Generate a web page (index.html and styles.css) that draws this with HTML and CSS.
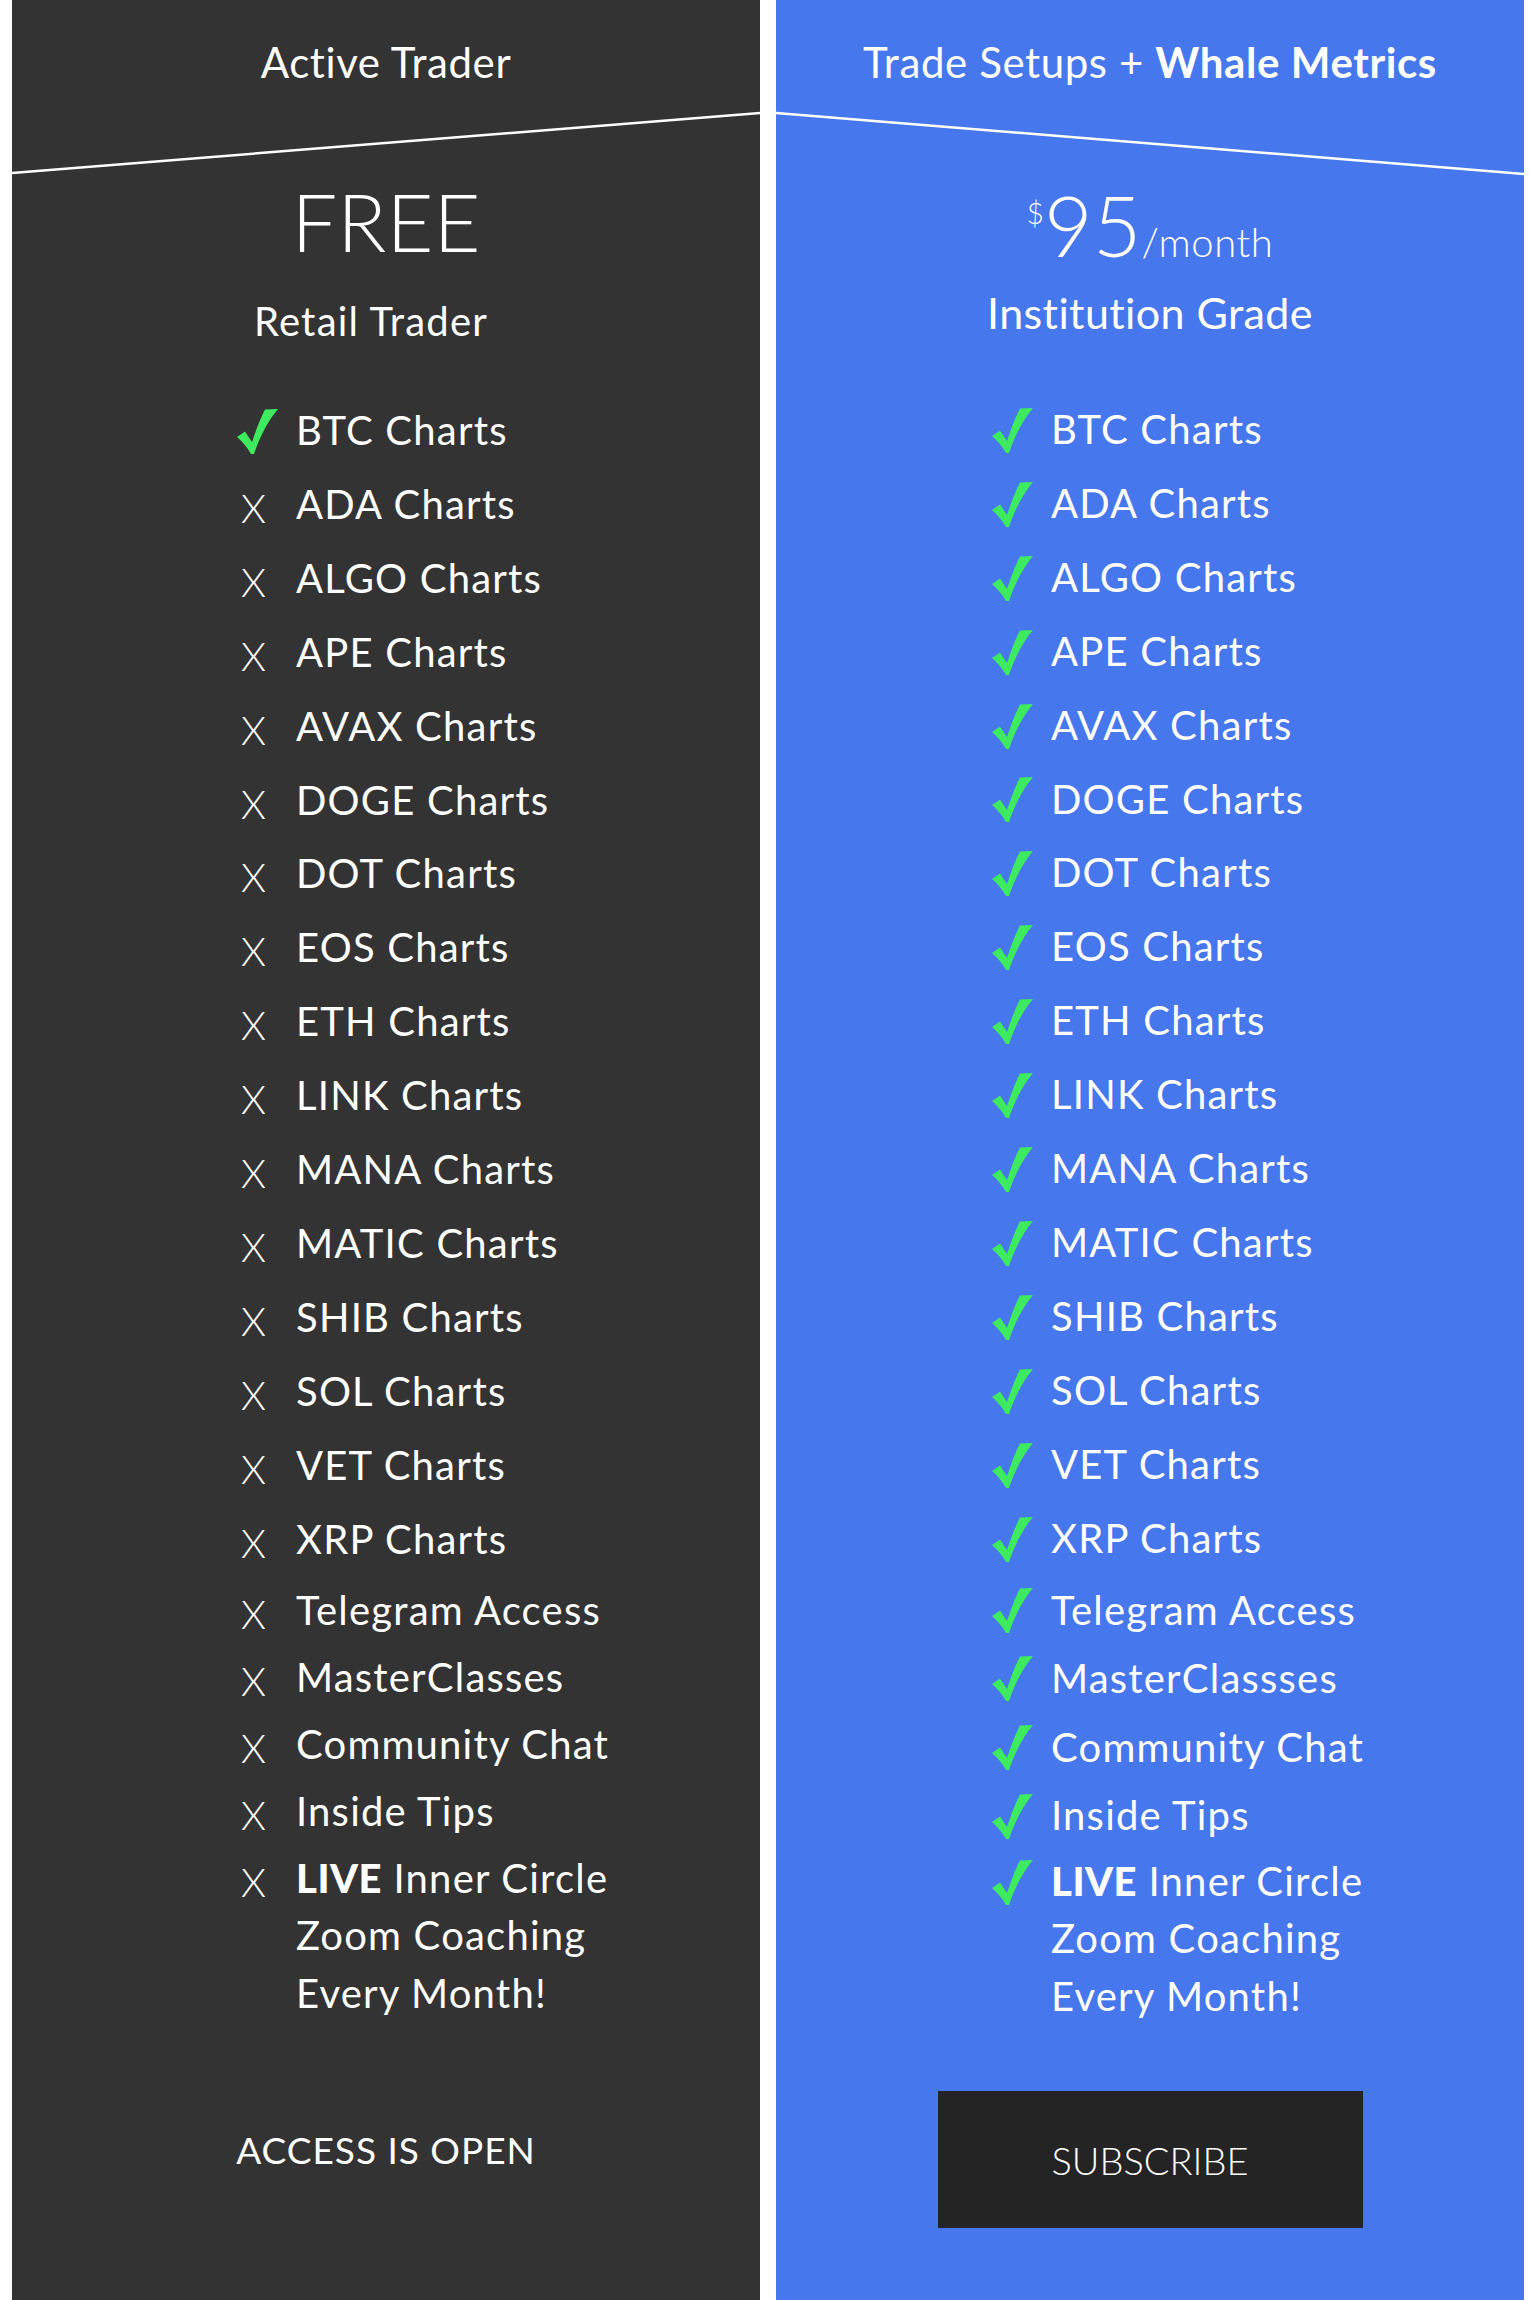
FILE: index.html
```html
<!DOCTYPE html>
<html lang="en">
<head>
    <meta charset="UTF-8">
    <meta name="viewport" content="width=device-width, initial-scale=1.0">
    <title>Plans - Active Trader vs Whale Metrics</title>
    <link rel="stylesheet" href="styles.css">
</head>
<body>
    <svg class="sprites" xmlns="http://www.w3.org/2000/svg">
        <symbol id="check" viewBox="0 0 41 46">
            <path d="M0 29 L8 23.5 L15 34 C19 22 23 11 28 1.5 L41 1 C31 13 23 28 17 46 L14 46 C10 39 5 33.5 0 29 Z"/>
        </symbol>
    </svg>

    <div class="plans">
        <!-- free plan -->
        <section class="plan plan-free">
            <header class="plan-head">Active Trader</header>
            <svg class="divider" viewBox="0 0 748 66" preserveAspectRatio="none">
                <line x1="0" y1="63" x2="748" y2="3" />
            </svg>
            <div class="price">FREE</div>
            <div class="tier">Retail Trader</div>

            <ul class="features">
                <li class="feature"><span class="mark"><svg><use href="#check"/></svg></span><span class="label">BTC Charts</span></li>
                <li class="feature"><span class="mark mark-x">X</span><span class="label">ADA Charts</span></li>
                <li class="feature"><span class="mark mark-x">X</span><span class="label">ALGO Charts</span></li>
                <li class="feature"><span class="mark mark-x">X</span><span class="label">APE Charts</span></li>
                <li class="feature"><span class="mark mark-x">X</span><span class="label">AVAX Charts</span></li>
                <li class="feature"><span class="mark mark-x">X</span><span class="label">DOGE Charts</span></li>
                <li class="feature"><span class="mark mark-x">X</span><span class="label">DOT Charts</span></li>
                <li class="feature"><span class="mark mark-x">X</span><span class="label">EOS Charts</span></li>
                <li class="feature"><span class="mark mark-x">X</span><span class="label">ETH Charts</span></li>
                <li class="feature"><span class="mark mark-x">X</span><span class="label">LINK Charts</span></li>
                <li class="feature"><span class="mark mark-x">X</span><span class="label">MANA Charts</span></li>
                <li class="feature"><span class="mark mark-x">X</span><span class="label">MATIC Charts</span></li>
                <li class="feature"><span class="mark mark-x">X</span><span class="label">SHIB Charts</span></li>
                <li class="feature"><span class="mark mark-x">X</span><span class="label">SOL Charts</span></li>
                <li class="feature"><span class="mark mark-x">X</span><span class="label">VET Charts</span></li>
                <li class="feature"><span class="mark mark-x">X</span><span class="label">XRP Charts</span></li>
                <li class="feature extra"><span class="mark mark-x">X</span><span class="label">Telegram Access</span></li>
                <li class="feature extra"><span class="mark mark-x">X</span><span class="label">MasterClasses</span></li>
                <li class="feature extra"><span class="mark mark-x">X</span><span class="label">Community Chat</span></li>
                <li class="feature extra"><span class="mark mark-x">X</span><span class="label">Inside Tips</span></li>
                <li class="feature live"><span class="mark mark-x">X</span><span class="label"><b>LIVE</b> Inner Circle<br>Zoom Coaching<br>Every Month!</span></li>
            </ul>

            <div class="access">ACCESS IS OPEN</div>
        </section>

        <!-- paid plan -->
        <section class="plan plan-pro">
            <header class="plan-head">Trade Setups + <b>Whale Metrics</b></header>
            <svg class="divider" viewBox="0 0 748 66" preserveAspectRatio="none">
                <line x1="0" y1="3" x2="748" y2="64" />
            </svg>
            <div class="price price-pro"><span class="currency">$</span>95<span class="period">/month</span></div>
            <div class="tier tier-pro">Institution Grade</div>

            <ul class="features">
                <li class="feature"><span class="mark"><svg><use href="#check"/></svg></span><span class="label">BTC Charts</span></li>
                <li class="feature"><span class="mark"><svg><use href="#check"/></svg></span><span class="label">ADA Charts</span></li>
                <li class="feature"><span class="mark"><svg><use href="#check"/></svg></span><span class="label">ALGO Charts</span></li>
                <li class="feature"><span class="mark"><svg><use href="#check"/></svg></span><span class="label">APE Charts</span></li>
                <li class="feature"><span class="mark"><svg><use href="#check"/></svg></span><span class="label">AVAX Charts</span></li>
                <li class="feature"><span class="mark"><svg><use href="#check"/></svg></span><span class="label">DOGE Charts</span></li>
                <li class="feature"><span class="mark"><svg><use href="#check"/></svg></span><span class="label">DOT Charts</span></li>
                <li class="feature"><span class="mark"><svg><use href="#check"/></svg></span><span class="label">EOS Charts</span></li>
                <li class="feature"><span class="mark"><svg><use href="#check"/></svg></span><span class="label">ETH Charts</span></li>
                <li class="feature"><span class="mark"><svg><use href="#check"/></svg></span><span class="label">LINK Charts</span></li>
                <li class="feature"><span class="mark"><svg><use href="#check"/></svg></span><span class="label">MANA Charts</span></li>
                <li class="feature"><span class="mark"><svg><use href="#check"/></svg></span><span class="label">MATIC Charts</span></li>
                <li class="feature"><span class="mark"><svg><use href="#check"/></svg></span><span class="label">SHIB Charts</span></li>
                <li class="feature"><span class="mark"><svg><use href="#check"/></svg></span><span class="label">SOL Charts</span></li>
                <li class="feature"><span class="mark"><svg><use href="#check"/></svg></span><span class="label">VET Charts</span></li>
                <li class="feature"><span class="mark"><svg><use href="#check"/></svg></span><span class="label">XRP Charts</span></li>
                <li class="feature extra"><span class="mark"><svg><use href="#check"/></svg></span><span class="label">Telegram Access</span></li>
                <li class="feature extra"><span class="mark"><svg><use href="#check"/></svg></span><span class="label">MasterClassses</span></li>
                <li class="feature extra"><span class="mark"><svg><use href="#check"/></svg></span><span class="label">Community Chat</span></li>
                <li class="feature extra"><span class="mark"><svg><use href="#check"/></svg></span><span class="label">Inside Tips</span></li>
                <li class="feature live"><span class="mark"><svg><use href="#check"/></svg></span><span class="label"><b>LIVE</b> Inner Circle<br>Zoom Coaching<br>Every Month!</span></li>
            </ul>

            <button class="subscribe">SUBSCRIBE</button>
        </section>
    </div>
</body>
</html>
```

FILE: styles.css
```css
* {
    margin: 0;
    padding: 0;
    box-sizing: border-box;
}

body {
    font-family: Lato, 'Open Sans', sans-serif;
    background: #ffffff;
    color: #ffffff;
}

.sprites {
    display: none;
}

.plans {
    display: grid;
    grid-template-columns: 748px 748px;
    column-gap: 16px;
    padding: 0 6px 0 12px;
    min-height: 100vh;
}

.plan {
    min-height: 100vh;
}

.plan-free {
    background: #333333;
}

.plan-pro {
    background: #4777ec;
}

.plan-head {
    height: 110px;
    padding-top: 14px;
    display: flex;
    align-items: center;
    justify-content: center;
    font-size: 42px;
    font-weight: 400;
    letter-spacing: 0.6px;
    white-space: pre;
}

.plan-head b {
    font-weight: 700;
}

.divider {
    display: block;
    width: 748px;
    height: 66px;
}

.divider line {
    stroke: #ffffff;
    stroke-width: 2.5;
}

.price {
    text-align: center;
    font-size: 81px;
    line-height: 90px;
    font-weight: 300;
}

.price-pro {
    padding-top: 4px;
    font-size: 84px;
}

.currency {
    font-size: 30px;
    line-height: 1;
    vertical-align: 33px;
}

.period {
    font-size: 40px;
    line-height: 1;
    letter-spacing: 0.6px;
}

.tier {
    text-align: center;
    font-size: 40px;
    line-height: 50px;
    letter-spacing: 1.2px;
    margin-top: 30px;
    padding-right: 30px;
}

.tier-pro {
    font-size: 43px;
    letter-spacing: 0.4px;
    margin-top: 18px;
    padding-right: 0;
}

.features {
    list-style: none;
    margin-top: 48px;
    padding-left: 225px;
}

.plan-pro .features {
    margin-top: 55px;
    padding-left: 216px;
}

.feature {
    --row: 73.9px;
    display: flex;
    align-items: flex-start;
    font-size: 40px;
    letter-spacing: 1.2px;
    line-height: var(--row);
}

.feature.extra {
    --row: 67px;
}

.plan-pro .feature.extra {
    --row: 68.6px;
}

.feature.live {
    --row: 57.5px;
    margin-top: 5px;
}

.plan-pro .feature.live {
    margin-top: 3px;
}

.mark {
    flex: 0 0 59px;
    height: var(--row);
    display: flex;
    align-items: center;
}

.mark svg {
    width: 41px;
    height: 46px;
    fill: #3eeb5f;
}

.mark-x {
    font-size: 40px;
    font-weight: 300;
    padding: 8px 0 0 4px;
}

.label b {
    font-weight: 900;
    letter-spacing: 0.5px;
}

.access {
    margin-top: 103px;
    text-align: center;
    font-size: 37px;
    line-height: 50px;
    letter-spacing: 1px;
    font-weight: 400;
}

.subscribe {
    display: block;
    width: 425px;
    height: 137px;
    margin: 66px auto 0;
    background: #242424;
    color: #ffffff;
    border: none;
    font-family: Lato, 'Open Sans', sans-serif;
    font-size: 38px;
    font-weight: 300;
    cursor: pointer;
}
```
